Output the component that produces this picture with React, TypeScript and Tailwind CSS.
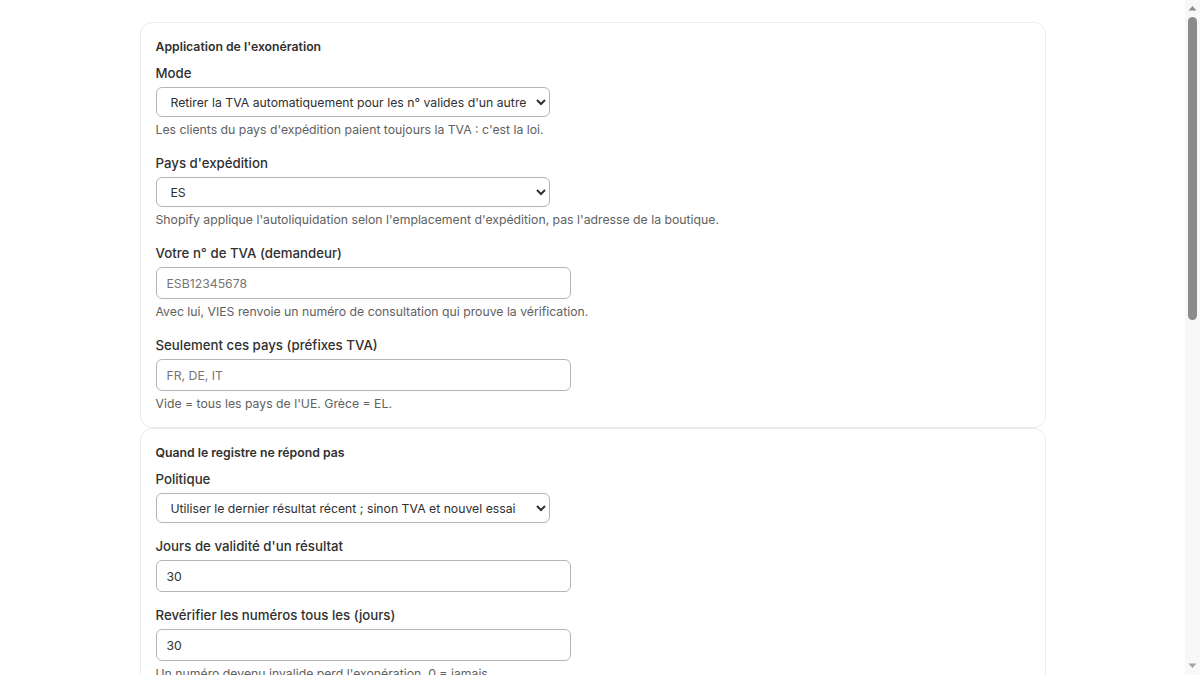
import React from "react";

const font = { fontFamily: "Inter, 'Noto Sans', sans-serif" };

function Field({ label, help, children }: { label: string; help?: string; children: React.ReactNode }) {
  return (
    <div className="mb-[13px]">
      <label className="block text-[13.25px] font-medium leading-5 text-[#303030]">{label}</label>
      <div className="mt-1">{children}</div>
      {help && <p className="mt-1 pb-px text-[12.25px] leading-[18px] text-[#616161]">{help}</p>}
    </div>
  );
}

function Select({ value, options }: { value: string; options: string[] }) {
  return (
    <select
      defaultValue={value}
      className="block h-[30px] w-[394px] rounded-md border border-[#b5b5b5] bg-white pl-2.5 pr-[6px] text-[12.25px] text-[#303030]"
    >
      {options.map((o) => (
        <option key={o}>{o}</option>
      ))}
    </select>
  );
}

function Input({ value, placeholder }: { value?: string; placeholder?: string }) {
  return (
    <input
      defaultValue={value}
      placeholder={placeholder}
      className="block h-[32px] w-[415px] rounded-md border border-[#b5b5b5] bg-white px-2.5 text-[12.25px] text-[#303030] placeholder:text-[#757575]"
    />
  );
}

function Card({ title, children }: { title: string; children: React.ReactNode }) {
  return (
    <section className="rounded-xl border border-[#ebebeb] bg-white px-[15px] pt-[15px]">
      <h2 className="mb-[7px] text-[12.25px] font-semibold leading-[18px] text-[#303030]">{title}</h2>
      {children}
    </section>
  );
}

// stand-in for the browser's classic scrollbar
function Scrollbar() {
  return (
    <div aria-hidden className="fixed right-0 top-0 flex h-screen w-[15px] flex-col items-center bg-[#f8f8f8]">
      <svg width="9" height="6" viewBox="0 0 9 6" className="mt-[5px]">
        <path d="M0.5 5.5 L4.5 1 L8.5 5.5 Z" fill="#8b8b8b" />
      </svg>
      <div className="mt-[6px] h-[303px] w-[9px] rounded-full bg-[#8b8b8b]" />
      <div className="flex-1" />
      <svg width="9" height="6" viewBox="0 0 9 6" className="mb-[6px]">
        <path d="M0.5 0.5 L4.5 5 L8.5 0.5 Z" fill="#a3a3a3" />
      </svg>
    </div>
  );
}

export default function App() {
  return (
    <div className="h-screen overflow-y-scroll bg-white pr-[15px]" style={font}>
      <div className="mx-auto flex w-[906px] flex-col pb-10 pt-[22px]">
        <Card title="Application de l'exonération">
          <Field label="Mode" help="Les clients du pays d'expédition paient toujours la TVA : c'est la loi.">
            <Select
              value="Retirer la TVA automatiquement pour les n° valides d'un autre pays de l'UE"
              options={[
                "Retirer la TVA automatiquement pour les n° valides d'un autre pays de l'UE",
                "Vérifier seulement, sans retirer la TVA",
              ]}
            />
          </Field>
          <Field label="Pays d'expédition" help="Shopify applique l'autoliquidation selon l'emplacement d'expédition, pas l'adresse de la boutique.">
            <Select value="ES" options={["ES", "FR", "DE", "IT"]} />
          </Field>
          <Field label="Votre n° de TVA (demandeur)" help="Avec lui, VIES renvoie un numéro de consultation qui prouve la vérification.">
            <Input placeholder="ESB12345678" />
          </Field>
          <Field label="Seulement ces pays (préfixes TVA)" help="Vide = tous les pays de l'UE. Grèce = EL.">
            <Input placeholder="FR, DE, IT" />
          </Field>
        </Card>

        <Card title="Quand le registre ne répond pas">
          <Field label="Politique">
            <Select
              value="Utiliser le dernier résultat récent ; sinon TVA et nouvel essai"
              options={[
                "Utiliser le dernier résultat récent ; sinon TVA et nouvel essai",
                "Toujours appliquer la TVA",
              ]}
            />
          </Field>
          <Field label="Jours de validité d'un résultat">
            <Input value="30" />
          </Field>
          <Field label="Revérifier les numéros tous les (jours)" help="Un numéro devenu invalide perd l'exonération. 0 = jamais.">
            <Input value="30" />
          </Field>
          <Field label="Nombre d'essais" help="Après ces essais, la commande garde la TVA.">
            <Input value="3" />
          </Field>
        </Card>

        <Card title="Justificatifs">
          <Field label="Mention sur la facture" help="Affichée sur les factures exonérées.">
            <Input value="Autoliquidation – article 196 de la directive 2006/112/CE" />
          </Field>
          <Field label="Conserver les preuves (années)" help="Numéro de consultation, date et résultat de VIES.">
            <Input value="10" />
          </Field>
          <Field label="E-mail d'alerte" help="Prévenu quand un numéro devient invalide.">
            <Input placeholder="vous@exemple.com" />
          </Field>
          <Field label="Langue des e-mails">
            <Select value="Français" options={["Français", "English", "Español"]} />
          </Field>
        </Card>

        <Card title="Journal">
          <Field label="Garder le journal (jours)" help="Les vérifications plus anciennes sont supprimées.">
            <Input value="365" />
          </Field>
          <Field label="Niveau de détail">
            <Select value="Normal" options={["Normal", "Détaillé"]} />
          </Field>
        </Card>
      </div>
      <Scrollbar />
    </div>
  );
}
